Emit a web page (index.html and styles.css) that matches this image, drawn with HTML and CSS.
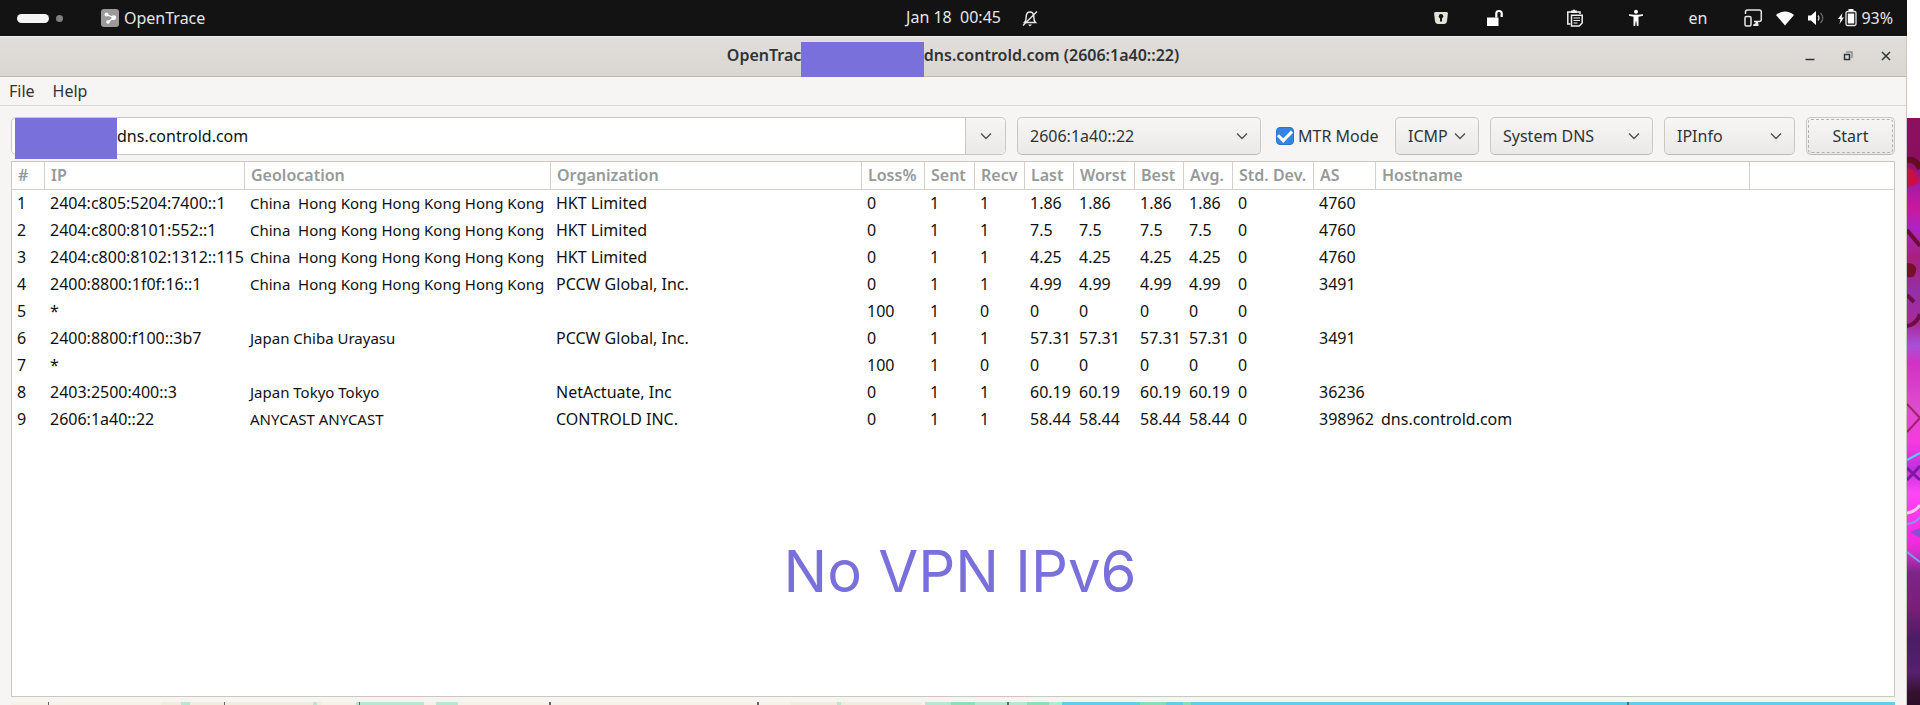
FILE: index.html
```html
<!DOCTYPE html>
<html lang="en">
<head>
  <meta charset="UTF-8">
  <title>OpenTrace</title>
  <link rel="stylesheet" href="styles.css">
</head>
<body>
  <div class="screen">

    <!-- Top panel -->
    <header class="panel">
      <div class="panel-left">
        <span class="workspace active"></span>
        <span class="workspace"></span>
        <svg class="app-icon" width="18" height="18" viewBox="0 0 18 18">
          <rect width="18" height="18" rx="3" fill="#9a9a9a"/>
          <path d="M5 5.5L13 8.500L7 13" fill="none" stroke="#fff" stroke-width="1.2"/>
          <circle cx="5.500" cy="5.500" r="2" fill="#fff"/>
          <circle cx="12.800" cy="8.700" r="2.400" fill="#fff"/>
          <circle cx="7" cy="13" r="1.800" fill="#fff"/>
        </svg>
        <span>OpenTrace</span>
      </div>
      <div class="clock">Jan 18&nbsp; 00:45</div>
      <div class="panel-right">
        <svg class="bell" width="16" height="18" viewBox="0 0 16 18" fill="none" stroke="#e8e8e8" stroke-width="1.500">
          <path d="M2.500 13.500h11c-1.500-1.500-1.700-3-1.700-5.500C11.800 5 10.500 3 8 3S4.200 5 4.200 8c0 2.500-.2 4-1.700 5.500z"/>
          <path d="M1 16.500L15 2.500"/>
          <path d="M6 15.500h4l-2 2z" fill="#e8e8e8" stroke="none"/>
        </svg>
        <div class="tray tray-apps">
          <svg width="18" height="18" viewBox="0 0 18 18">
            <path d="M3.500 3h11q1.500 0 1.400 1.500L15 12q-.5 3-3 3H6q-2.500 0-3-3L2.100 4.500Q2 3 3.500 3z" fill="#e4e1d6"/>
            <circle cx="9" cy="7.300" r="2.200" fill="#131313"/>
            <path d="M8 8h2v4.500H8z" fill="#131313"/>
          </svg>
          <svg width="18" height="18" viewBox="0 0 18 18">
            <path d="M1 8.500h11.500V17H1z" fill="#fff"/>
            <path d="M10.300 8.500V4.500q0-2.500 2.700-2.500t2.700 2.500V8" fill="none" stroke="#fff" stroke-width="2.200"/>
          </svg>
        </div>
        <div class="tray tray-tools">
          <svg width="18" height="18" viewBox="0 0 18 18" fill="none" stroke="#f0f0f0" stroke-width="1.500">
            <path d="M4.500 15H1.800V3H14v2"/>
            <path d="M5 4V1.500h1.500Q8-.3 9.500 1.500H11V4z" fill="#f0f0f0" stroke="none"/>
            <path d="M5.500 6.200h10.700V14l-3 3H5.500z"/>
            <path d="M7.500 9h6.500M7.500 11.500h6.500M7.500 14h4" stroke-width="1.200"/>
          </svg>
          <svg width="18" height="18" viewBox="0 0 18 18" fill="#fff">
            <circle cx="9" cy="2.800" r="2"/>
            <path d="M2 5.200l5 .5h4l5-.5v1.600l-4.500 1V17H9.800l-.4-4.500h-.8L8.200 17H6.500V7.800L2 6.800z"/>
          </svg>
          <span>en</span>
        </div>
        <div class="tray tray-status">
          <svg width="18" height="18" viewBox="0 0 18 18" fill="none" stroke="#e8e8e8" stroke-width="1.500">
            <path d="M1.500 5V3q0-2 2-2h11.800q2 0 2 2v7.500q0 2-2 2H10"/>
            <rect x="1" y="7.500" width="6" height="9.500" rx="1.500"/>
            <path d="M9 17q0-2.500 2-2.500h.5V12.500h2.500v2h.5V17z" fill="#e8e8e8" stroke="none"/>
          </svg>
          <svg width="18" height="18" viewBox="0 0 18 18">
            <path d="M0 6Q4 2.500 9 2.500T18 6L9 16.500z" fill="#fff"/>
          </svg>
          <svg width="16" height="18" viewBox="0 0 16 18" fill="none">
            <path d="M0 6.500h3L8 2v14l-5-4.500H0z" fill="#fff"/>
            <path d="M10 6.500q2 2.500 0 5" stroke="#ccc" stroke-width="1.300"/>
            <path d="M12.500 4q4.500 5 0 10" stroke="#666" stroke-width="1.300"/>
          </svg>
          <div class="battery">
            <svg width="19" height="18" viewBox="0 0 19 18">
              <path d="M4.500 4L0 10h2.500l-1 5L6 8.500H3.500z" fill="#fff"/>
              <rect x="8" y="2.500" width="10" height="14" rx="1.500" fill="none" stroke="#e8e8e8" stroke-width="1.300"/>
              <path d="M9.800 4.500h6.400v10H9.800zM10.500 0h5v2h-5z" fill="#fff"/>
            </svg>
            <span>93%</span>
          </div>
        </div>
      </div>
    </header>

    <main class="window">
      <div class="titlebar">
        <h1 class="title">
          <span class="title-start">OpenTrac</span>
          <span class="title-mask"></span>
          <span>dns.controld.com (2606:1a40::22)</span>
        </h1>
        <div class="window-buttons">
          <button type="button" aria-label="Minimize">
            <svg width="10" height="10" viewBox="0 0 10 10"><path d="M.5 8.500h9" stroke="#2e3436" stroke-width="1.500"/></svg>
          </button>
          <button type="button" aria-label="Restore">
            <svg width="10" height="10" viewBox="0 0 10 10" fill="none"><path d="M3 1h6v6" stroke="#8b8e8f" stroke-width="1.500"/><path d="M1.500 3.500h5v5h-5z" stroke="#2e3436" stroke-width="1.500"/></svg>
          </button>
          <button type="button" aria-label="Close">
            <svg width="10" height="10" viewBox="0 0 10 10"><path d="M1 1l8 8M9 1L1 9" stroke="#2e3436" stroke-width="1.500"/></svg>
          </button>
        </div>
      </div>

      <nav class="menubar">
        <a href="#">File</a>
        <a href="#">Help</a>
      </nav>

      <form class="toolbar" onsubmit="event.preventDefault();">
        <div class="host">
          <span class="host-mask"></span>
          <input type="text" value="dns.controld.com" aria-label="Host">
          <button type="button" aria-label="History">
            <svg class="chevron" width="12" height="8" viewBox="0 0 12 8"><path d="M1 1.500l5 5 5-5"/></svg>
          </button>
        </div>
        <div class="combo combo-address">
          <select aria-label="Address"><option>2606:1a40::22</option></select>
          <svg class="chevron" width="12" height="8" viewBox="0 0 12 8"><path d="M1 1.500l5 5 5-5"/></svg>
        </div>
        <div class="check">
          <input type="checkbox" id="mtr" checked>
          <label for="mtr">MTR Mode</label>
        </div>
        <div class="combo combo-protocol">
          <select aria-label="Protocol"><option>ICMP</option></select>
          <svg class="chevron" width="12" height="8" viewBox="0 0 12 8"><path d="M1 1.500l5 5 5-5"/></svg>
        </div>
        <div class="combo combo-dns">
          <select aria-label="DNS"><option>System DNS</option></select>
          <svg class="chevron" width="12" height="8" viewBox="0 0 12 8"><path d="M1 1.500l5 5 5-5"/></svg>
        </div>
        <div class="combo combo-source">
          <select aria-label="Data source"><option>IPInfo</option></select>
          <svg class="chevron" width="12" height="8" viewBox="0 0 12 8"><path d="M1 1.500l5 5 5-5"/></svg>
        </div>
        <button type="submit" class="start"><span>Start</span></button>
      </form>

      <div class="results">
        <table>
          <colgroup>
            <col class="c-num"><col class="c-ip"><col class="c-geo"><col class="c-org">
            <col class="c-loss"><col class="c-count"><col class="c-count"><col class="c-time">
            <col class="c-worst"><col class="c-time"><col class="c-time"><col class="c-dev">
            <col class="c-as"><col class="c-host"><col>
          </colgroup>
          <thead>
            <tr><th>#</th><th>IP</th><th>Geolocation</th><th>Organization</th><th>Loss%</th><th>Sent</th><th>Recv</th><th>Last</th><th>Worst</th><th>Best</th><th>Avg.</th><th>Std. Dev.</th><th>AS</th><th>Hostname</th><th></th></tr>
          </thead>
          <tbody>
            <tr><td>1</td><td>2404:c805:5204:7400::1</td><td class="geo">China&nbsp; Hong Kong Hong Kong Hong Kong</td><td>HKT Limited</td><td>0</td><td>1</td><td>1</td><td>1.86</td><td>1.86</td><td>1.86</td><td>1.86</td><td>0</td><td>4760</td><td></td><td></td></tr>
            <tr><td>2</td><td>2404:c800:8101:552::1</td><td class="geo">China&nbsp; Hong Kong Hong Kong Hong Kong</td><td>HKT Limited</td><td>0</td><td>1</td><td>1</td><td>7.5</td><td>7.5</td><td>7.5</td><td>7.5</td><td>0</td><td>4760</td><td></td><td></td></tr>
            <tr><td>3</td><td>2404:c800:8102:1312::115</td><td class="geo">China&nbsp; Hong Kong Hong Kong Hong Kong</td><td>HKT Limited</td><td>0</td><td>1</td><td>1</td><td>4.25</td><td>4.25</td><td>4.25</td><td>4.25</td><td>0</td><td>4760</td><td></td><td></td></tr>
            <tr><td>4</td><td>2400:8800:1f0f:16::1</td><td class="geo">China&nbsp; Hong Kong Hong Kong Hong Kong</td><td>PCCW Global, Inc.</td><td>0</td><td>1</td><td>1</td><td>4.99</td><td>4.99</td><td>4.99</td><td>4.99</td><td>0</td><td>3491</td><td></td><td></td></tr>
            <tr><td>5</td><td>*</td><td class="geo"></td><td></td><td>100</td><td>1</td><td>0</td><td>0</td><td>0</td><td>0</td><td>0</td><td>0</td><td></td><td></td><td></td></tr>
            <tr><td>6</td><td>2400:8800:f100::3b7</td><td class="geo">Japan Chiba Urayasu</td><td>PCCW Global, Inc.</td><td>0</td><td>1</td><td>1</td><td>57.31</td><td>57.31</td><td>57.31</td><td>57.31</td><td>0</td><td>3491</td><td></td><td></td></tr>
            <tr><td>7</td><td>*</td><td class="geo"></td><td></td><td>100</td><td>1</td><td>0</td><td>0</td><td>0</td><td>0</td><td>0</td><td>0</td><td></td><td></td><td></td></tr>
            <tr><td>8</td><td>2403:2500:400::3</td><td class="geo">Japan Tokyo Tokyo</td><td>NetActuate, Inc</td><td>0</td><td>1</td><td>1</td><td>60.19</td><td>60.19</td><td>60.19</td><td>60.19</td><td>0</td><td>36236</td><td></td><td></td></tr>
            <tr><td>9</td><td>2606:1a40::22</td><td class="geo">ANYCAST ANYCAST</td><td>CONTROLD INC.</td><td>0</td><td>1</td><td>1</td><td>58.44</td><td>58.44</td><td>58.44</td><td>58.44</td><td>0</td><td>398962</td><td>dns.controld.com</td><td></td></tr>
          </tbody>
        </table>
      </div>

      <!-- Top edge of the map -->
      <svg class="map" viewBox="0 0 1884 3" preserveAspectRatio="none">
        <rect width="1884" height="3" fill="#f6f2e6"/>
        <path d="M150 0h160v3H150zM780 0h130v3H780z" fill="#f0eddb"/>
        <path d="M170 0h9v3h-9zM302 0h4v3h-4zM345 0h68v3h-68zM425 0h22v3h-22zM826 0h4v3h-4zM914 0h138v3H914z" fill="#b4e8cf"/>
        <path d="M940 0h24v3h-24zM1016 0h22v3h-22z" fill="#93dcb6"/>
        <path d="M1051 0h833v3h-833z" fill="#63cfe6"/>
        <path d="M1129 0h26v3h-26zM1172 0h8v3h-8z" fill="#8ddcb8"/>
        <path d="M37 0h1v3h-1zM106 0l2 3M213 0h1v3h-1zM348 0h1v3h-1zM538 0h2v3h-2zM746 0h2v3h-2zM996 0h2v3h-2zM1616 0h2v3h-2z" fill="#666"/>
      </svg>
    </main>

    <div class="wallpaper">
      <svg width="13" height="587" viewBox="0 0 13 587" fill="none">
        <path d="M0 42q9-2 13 9" stroke="#650b25" stroke-width="6"/>
        <path d="M0 50q9 0 12 14l-12 6z" fill="#c80e42"/>
        <path d="M0 112l13 16" stroke="#6d0d35" stroke-width="4"/>
        <path d="M0 145q10 0 9 8t-9 6z" fill="#74102a"/>
        <path d="M0 177l7 7M0 208q10-2 13-12" stroke="#6d0d45" stroke-width="4"/>
        <path d="M0 286l13 14-13 14" stroke="#a02070" stroke-width="2"/>
        <path d="M0 342l13-7" stroke="#62c6f5" stroke-width="2"/>
        <path d="M0 350l13 12M0 362l13-14" stroke="#7a1ba0" stroke-width="3"/>
        <path d="M0 395q8-1 13-8" stroke="#ffc8f0" stroke-width="3"/>
        <path d="M0 406q9-1 13-7M0 434l13 10" stroke="#7a9cf0" stroke-width="2"/>
        <path d="M3 414l10-4v10z" fill="#8a4fd0"/>
      </svg>
    </div>

    <p class="caption">No VPN IPv6</p>
  </div>
</body>
</html>
```
FILE: styles.css
```css
* {
  box-sizing: border-box;
}

body {
  margin: 0;
  background: #fff;
  font-family: "Noto Sans", "Open Sans", sans-serif;
  font-size: 16px;
  color: #2e3436;
}

button,
input,
select {
  font: inherit;
  color: inherit;
}

svg {
  display: block;
  flex: none;
}

.screen {
  position: relative;
  display: grid;
  grid-template-columns: 1fr 13px;
  grid-template-rows: 36px 1fr;
  height: 100vh;
  overflow: hidden;
}

/* top panel */
.panel {
  display: grid;
  grid-template-columns: 1fr auto 1fr;
  align-items: center;
  background: #131313;
  color: #e6e6e6;
}

.panel-left {
  display: flex;
  align-items: center;
  padding-left: 17px;
}

.workspace {
  width: 7px;
  height: 7px;
  border-radius: 4px;
  background: #808080;
}

.workspace.active {
  width: 32px;
  height: 9px;
  margin-right: 7px;
  border-radius: 5px;
  background: #f4f4f4;
}

.app-icon {
  margin: 0 5px 0 38px;
}

.clock {
  padding-bottom: 2px;
}

.panel-right {
  display: flex;
  align-items: center;
  padding-right: 14px;
}

.bell {
  margin: 0 auto 0 21px;
}

.tray {
  display: flex;
  align-items: center;
}

.tray-apps {
  gap: 36px;
  margin-right: 62px;
}

.tray-tools {
  gap: 43px;
  margin-right: 37px;
}

.tray-status {
  gap: 14px;
}

.battery {
  display: flex;
  align-items: center;
  gap: 4px;
}

/* window */
.window {
  grid-column: 1;
  display: flex;
  flex-direction: column;
  min-height: 0;
  background: #f6f5f3;
  border-right: 1px solid #c9c6c2;
}

.titlebar {
  position: relative;
  flex: none;
  display: flex;
  justify-content: center;
  height: 41px;
  background: linear-gradient(#e1dedb, #dad6d1);
  border-top: 1px solid #f2f1f0;
  border-bottom: 1px solid #bfb8b1;
}

.title {
  display: flex;
  margin: 0;
  font-size: 16px;
  font-weight: 600;
  line-height: 36px;
}

.title-start {
  width: 74px;
}

.title-mask {
  width: 123px;
  height: 35px;
  margin-top: 5px;
  background: #7a70dc;
}

.window-buttons {
  position: absolute;
  right: 15px;
  top: 0;
  display: flex;
  align-items: center;
  gap: 28px;
  height: 38px;
}

.window-buttons button {
  padding: 0;
  border: none;
  background: none;
}

.menubar {
  flex: none;
  display: flex;
  gap: 18px;
  height: 29px;
  padding-left: 9px;
  border-bottom: 1px solid #dcdad7;
  line-height: 28px;
}

.menubar a {
  color: inherit;
  text-decoration: none;
}

.toolbar {
  flex: none;
  display: flex;
  gap: 11px;
  padding: 11px 11px 6px;
}

.host {
  position: relative;
  flex: 1;
  display: flex;
  min-width: 0;
  height: 38px;
  border: 1px solid #cdc7c2;
  border-radius: 5px;
  background: #fff;
}

.host input {
  flex: 1;
  min-width: 0;
  padding: 0 8px 0 105px;
  border: none;
  border-radius: 5px;
  background: #fff;
  color: #111;
  outline: none;
}

.host button {
  display: flex;
  align-items: center;
  justify-content: center;
  width: 40px;
  padding: 0;
  border: none;
  border-left: 1px solid #cdc7c2;
  border-radius: 0 5px 5px 0;
  background: linear-gradient(#f6f5f4, #ebe9e8);
}

.host-mask {
  position: absolute;
  left: 3px;
  top: 0;
  width: 102px;
  height: 41px;
  background: #7a70dc;
}

.chevron {
  fill: none;
  stroke: #4a4f51;
  stroke-width: 1.3;
}

.combo {
  display: grid;
  align-items: center;
}

.combo select,
.combo .chevron {
  grid-area: 1 / 1;
}

.combo select {
  width: 100%;
  height: 38px;
  padding: 0 12px;
  appearance: none;
  border: 1px solid #cdc7c2;
  border-bottom-color: #bfb8b1;
  border-radius: 5px;
  background: linear-gradient(#f7f6f5, #ebe9e8);
}

.combo .chevron {
  justify-self: end;
  margin-right: 13px;
  pointer-events: none;
}

.combo-address {
  width: 244px;
}

.combo-protocol {
  width: 84px;
}

.combo-dns {
  width: 163px;
}

.combo-source {
  width: 131px;
}

.check {
  display: flex;
  align-items: center;
  gap: 4px;
  width: 112px;
  padding-left: 4px;
  white-space: nowrap;
}

.check input {
  display: grid;
  place-items: center;
  flex: none;
  appearance: none;
  width: 18px;
  height: 18px;
  margin: 0;
  border: 1px solid #2b74d0;
  border-radius: 4px;
  background: #3584e4;
}

.check input:checked::before {
  content: "";
  width: 11px;
  height: 6px;
  margin-bottom: 4px;
  border: solid #fff;
  border-width: 0 0 3px 3px;
  transform: rotate(-45deg);
}

.start {
  width: 89px;
  height: 38px;
  padding: 1px;
  border: 1px solid #cdc7c2;
  border-bottom-color: #bfb8b1;
  border-radius: 5px;
  background: linear-gradient(#f7f6f5, #ebe9e8);
}

.start span {
  display: block;
  height: 34px;
  border: 1px dashed #b4b2b0;
  border-radius: 3px;
  line-height: 32px;
}

/* hop list */
.results {
  flex: 1;
  min-height: 0;
  margin: 0 11px 5px;
  overflow: hidden;
  border: 1px solid #cdc7c2;
  background: #fff;
}

table {
  width: 100%;
  table-layout: fixed;
  border-collapse: separate;
  border-spacing: 0;
  color: #111;
}

th,
td {
  padding: 0 0 2px 5px;
  line-height: 22px;
  text-align: left;
  white-space: nowrap;
}

th {
  height: 28px;
  padding-left: 6px;
  border-right: 1px solid #d5d0cc;
  border-bottom: 1px solid #d5d0cc;
  color: #969999;
  font-weight: 600;
}

th:last-child {
  border-right: none;
}

td {
  height: 27px;
}

.geo {
  font-size: 15px;
}

.c-num {
  width: 33px;
}

.c-ip {
  width: 200px;
}

.c-geo {
  width: 306px;
}

.c-org {
  width: 311px;
}

.c-loss {
  width: 63px;
}

.c-count {
  width: 50px;
}

.c-time {
  width: 49px;
}

.c-worst {
  width: 61px;
}

.c-dev {
  width: 81px;
}

.c-as {
  width: 62px;
}

.c-host {
  width: 374px;
}

.map {
  width: calc(100% - 22px);
  height: 3px;
  margin: 0 11px;
}

.wallpaper {
  grid-column: 2;
  margin-top: 82px;
  overflow: hidden;
  background: linear-gradient(#8c1060 0, #8a0f5e 40px, #a81aa5 70px, #c8189c 90px, #ac24c4 110px, #a8207e 140px, #9430a8 175px, #a82a98 205px, #a850d8 228px, #d232c4 245px, #de4ccc 290px, #f838e0 325px, #c030e0 350px, #ff46f4 375px, #ff28e2 420px, #d030c8 435px, #7c2488 455px, #7a1e78 490px, #4a1c66 520px, #56206e 555px, #34102c 575px, #2c0f28 587px);
}

.caption {
  position: absolute;
  left: 0;
  right: 0;
  top: 535px;
  margin: 0;
  font-family: Inter, sans-serif;
  font-size: 58px;
  line-height: 72px;
  text-align: center;
  color: #7a70dc;
}
```
